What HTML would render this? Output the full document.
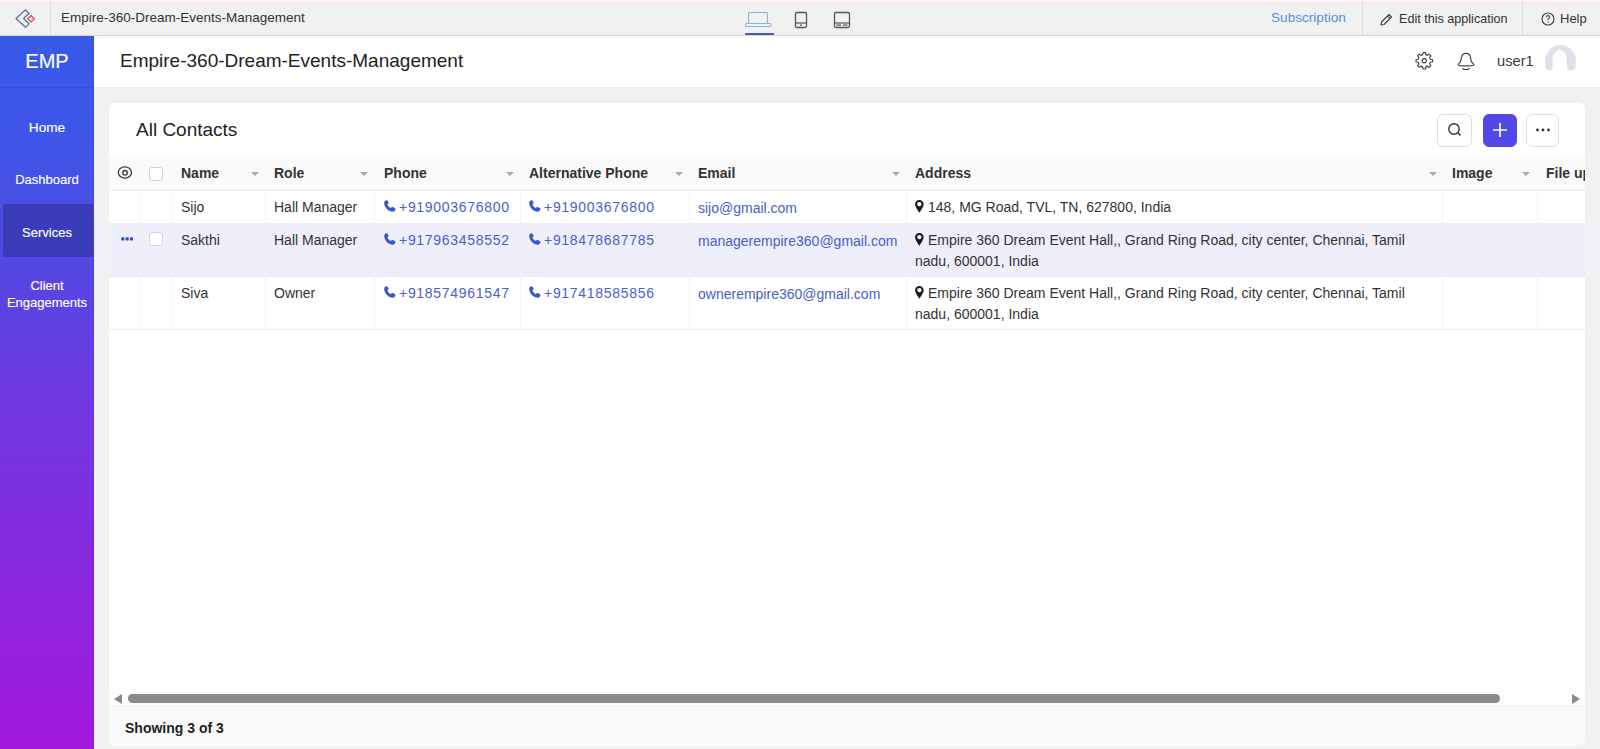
<!DOCTYPE html>
<html><head><meta charset="utf-8">
<style>
*{box-sizing:border-box;margin:0;padding:0}
html,body{width:1600px;height:749px;overflow:hidden;background:#f0f1f3;font-family:"Liberation Sans",sans-serif;color:#333}
.abs{position:absolute}
#topbar{position:absolute;left:0;top:0;width:1600px;height:36px;background:#f1f1f1;border-bottom:1px solid #d6d6d6}
#topbar .pink{position:absolute;left:0;top:0;width:1600px;height:2px;background:#fff1f5;border-bottom:0}
#topbar .pink2{position:absolute;left:0;top:2px;width:1600px;height:2px;background:#f0ebed}
.vsep{position:absolute;top:2px;width:1px;height:33px;background:#dcdcdc}
.tt{position:absolute;white-space:nowrap}
#side{position:absolute;left:0;top:36px;width:94px;height:713px;background:linear-gradient(180deg,#3759ea 0%,#3f55e7 16%,#5547e2 33%,#7038e0 52%,#a218dc 100%)}
#side .it{position:absolute;left:0;width:94px;text-align:center;color:#fff;font-size:13px;line-height:17px;-webkit-text-stroke:0.15px #fff}
#side .sel{position:absolute;left:3px;top:168px;width:90px;height:53px;background:#3b3cb9}
#hdr{position:absolute;left:94px;top:36px;width:1506px;height:52px;background:#fff;border-bottom:1px solid #ebecee}
#card{position:absolute;left:109px;top:103px;width:1476px;height:643px;background:#fff;border-radius:6px;overflow:hidden}
.btn{position:absolute;top:11px;width:35px;height:33px;border:1px solid #dedede;border-radius:6px;background:#fff}
#thead{position:absolute;left:0;top:54px;width:1476px;height:34px;background:#fafafa;border-bottom:1px solid #ececec}
.th{position:absolute;top:7px;font-weight:bold;font-size:14px;line-height:18px;color:#333;white-space:nowrap}
.arr{position:absolute;top:15px;width:0;height:0;border-left:4px solid transparent;border-right:4px solid transparent;border-top:4px solid #aaa}
.row{position:absolute;left:0;width:1476px;border-bottom:1px solid #ededed}
.cs{position:absolute;top:0;width:1px;background:#f4f4f6}
.td{position:absolute;font-size:14px;line-height:20px;color:#333;white-space:nowrap}
.lk{color:#4a60c8}
.ph{letter-spacing:0.7px}
</style></head><body>

<div id="topbar">
  <div class="pink"></div><div class="pink2"></div>
  <svg class="abs" style="left:14px;top:9px" width="24" height="20" viewBox="0 0 24 20">
    <path d="M11.5 0.9 L2 9.5 L11.5 18.3 L15 14.8 L9.6 9.5 L15 4.2 Z" fill="none" stroke="#4f6f9f" stroke-width="1.2" stroke-linejoin="round"/>
    <path d="M17 6.6 L20.2 9.8 L17 13 L13.8 9.8 Z" fill="none" stroke="#d05a5a" stroke-width="1.4"/>
  </svg>
  <div class="vsep" style="left:50px"></div>
  <div class="tt" style="left:61px;top:10px;font-size:13.5px;line-height:16px;color:#333">Empire-360-Dream-Events-Management</div>

  <svg class="abs" style="left:744px;top:10px" width="30" height="20" viewBox="0 0 30 20">
    <rect x="4.5" y="2.5" width="19" height="11" rx="1" fill="none" stroke="#86b2e4" stroke-width="1.1"/>
    <rect x="1.5" y="13.5" width="25.5" height="3" rx="1.2" fill="none" stroke="#86b2e4" stroke-width="1.1"/>
  </svg>
  <div class="abs" style="left:745px;top:33px;width:29px;height:2px;background:#4a5cab"></div>
  <svg class="abs" style="left:793px;top:10px" width="16" height="20" viewBox="0 0 16 20">
    <rect x="2.5" y="2.5" width="11" height="15" rx="1.5" fill="none" stroke="#555" stroke-width="1.3"/>
    <line x1="2.5" y1="13" x2="13.5" y2="13" stroke="#555" stroke-width="1.2"/>
    <rect x="7" y="14.5" width="2" height="1.2" fill="#555"/>
  </svg>
  <svg class="abs" style="left:832px;top:10px" width="20" height="20" viewBox="0 0 20 20">
    <rect x="2.5" y="2.5" width="15" height="15" rx="1.5" fill="none" stroke="#555" stroke-width="1.3"/>
    <line x1="2.5" y1="13" x2="17.5" y2="13" stroke="#555" stroke-width="1.2"/>
    <rect x="4.5" y="14.5" width="4.5" height="1.2" fill="#555"/>
    <rect x="11" y="14.5" width="4.5" height="1.2" fill="#555"/>
  </svg>

  <div class="tt" style="left:1271px;top:10px;font-size:13.6px;line-height:16px;color:#5690d3">Subscription</div>
  <div class="vsep" style="left:1362px"></div>
  <svg class="abs" style="left:1378px;top:11.5px" width="16" height="16" viewBox="0 0 16 16">
    <path d="M3 13 L3.5 10 L11 2.5 L13.5 5 L6 12.5 Z M9.5 4 L12 6.5" fill="none" stroke="#444" stroke-width="1.2" stroke-linejoin="round"/>
  </svg>
  <div class="tt" style="left:1399px;top:11px;font-size:12.6px;line-height:16px;color:#333">Edit this application</div>
  <div class="vsep" style="left:1522px"></div>
  <svg class="abs" style="left:1540px;top:11px" width="16" height="16" viewBox="0 0 16 16">
    <circle cx="8" cy="8" r="6" fill="none" stroke="#444" stroke-width="1.2"/>
    <path d="M6.3 6.3 Q6.3 4.6 8 4.6 Q9.7 4.6 9.7 6.2 Q9.7 7.3 8 8 L8 9.3" fill="none" stroke="#444" stroke-width="1.1"/>
    <circle cx="8" cy="11.2" r="0.7" fill="#444"/>
  </svg>
  <div class="tt" style="left:1560px;top:11px;font-size:13px;line-height:16px;color:#333">Help</div>
</div>

<div id="side">
  <div class="it" style="top:14px;font-size:20px;line-height:22px">EMP</div>
  <div class="abs" style="left:0;top:51px;width:94px;height:1px;background:rgba(20,30,120,0.12)"></div>
  <div class="abs" style="left:93px;top:0;width:1px;height:713px;background:rgba(20,20,80,0.15)"></div>
  <div class="it" style="top:83px;font-size:13.6px">Home</div>
  <div class="it" style="top:135px">Dashboard</div>
  <div class="sel"></div>
  <div class="it" style="top:188px">Services</div>
  <div class="it" style="top:241px">Client</div>
  <div class="it" style="top:258px">Engagements</div>
</div>

<div id="hdr">
  <div class="tt" style="left:26px;top:14px;font-size:19px;line-height:22px;color:#222">Empire-360-Dream-Events-Management</div>
  <svg class="abs" style="left:1320px;top:15px" width="20" height="20" viewBox="0 0 20 20">
    <circle cx="10.25" cy="9.75" r="2.1" fill="none" stroke="#444" stroke-width="1.15"/>
    <path d="M8.73 3.64 L8.95 1.55 L11.55 1.55 L11.77 3.64 L13.49 4.35 L15.13 3.04 L16.96 4.87 L15.65 6.51 L16.36 8.23 L18.45 8.45 L18.45 11.05 L16.36 11.27 L15.65 12.99 L16.96 14.63 L15.13 16.46 L13.49 15.15 L11.77 15.86 L11.55 17.95 L8.95 17.95 L8.73 15.86 L7.01 15.15 L5.37 16.46 L3.54 14.63 L4.85 12.99 L4.14 11.27 L2.05 11.05 L2.05 8.45 L4.14 8.23 L4.85 6.51 L3.54 4.87 L5.37 3.04 L7.01 4.35 Z" fill="none" stroke="#444" stroke-width="1.15" stroke-linejoin="round"/>
  </svg>
  <svg class="abs" style="left:1361px;top:15px" width="22" height="22" viewBox="0 0 22 22">
    <path d="M11 2.3 Q15.4 2.3 15.7 7.6 Q15.9 11 18.2 12.6 Q19.3 13.5 18.4 14.3 Q17.4 14.9 11 14.9 Q4.6 14.9 3.6 14.3 Q2.7 13.5 3.8 12.6 Q6.1 11 6.3 7.6 Q6.6 2.3 11 2.3 Z" fill="none" stroke="#444" stroke-width="1.15" stroke-linejoin="round"/>
    <path d="M7.3 17.4 Q11 19.6 14.7 17.4" fill="none" stroke="#444" stroke-width="1.15"/>
  </svg>
  <div class="tt" style="left:1403px;top:16px;font-size:14.7px;line-height:18px;color:#3c3c3c">user1</div>
  <svg class="abs" style="left:1450px;top:8px" width="34" height="34" viewBox="0 0 34 34">
    <path d="M1.3 17 A15.3 16 0 0 1 31.9 17 L31.6 23 Q30.5 26.5 25.5 26.5 Q22.8 25.5 22.8 22 L22.8 17 A7.1 11.2 0 0 0 8.6 17 L8.6 22 Q8.6 25.5 6 26.5 Q1.8 26.5 1.3 23 Z" fill="#dde1ea"/>
  </svg>
</div>

<div id="card">
  <div class="tt" style="left:27px;top:16px;font-size:19px;line-height:22px;color:#222">All Contacts</div>
  <div class="btn" style="left:1328px">
    <svg class="abs" style="left:8px;top:6px" width="18" height="18" viewBox="0 0 18 18">
      <circle cx="8" cy="8" r="5.2" fill="none" stroke="#333" stroke-width="1.4"/>
      <line x1="11.8" y1="11.8" x2="14.5" y2="14.5" stroke="#333" stroke-width="1.5"/>
    </svg>
  </div>
  <div class="btn" style="left:1374px;width:34px;background:#5248e8;border-color:#5248e8">
    <svg class="abs" style="left:6px;top:5px" width="20" height="20" viewBox="0 0 20 20">
      <line x1="10" y1="3" x2="10" y2="17" stroke="#fff" stroke-width="1.7"/>
      <line x1="3" y1="10" x2="17" y2="10" stroke="#fff" stroke-width="1.7"/>
    </svg>
  </div>
  <div class="btn" style="left:1417px;width:33px">
    <svg class="abs" style="left:6px;top:11px" width="20" height="8" viewBox="0 0 20 8">
      <circle cx="4.5" cy="4" r="1.4" fill="#333"/><circle cx="10" cy="4" r="1.4" fill="#333"/><circle cx="15.5" cy="4" r="1.4" fill="#333"/>
    </svg>
  </div>

  <div id="thead">
    <svg class="abs" style="left:7px;top:9px" width="17" height="14" viewBox="0 0 17 14">
      <ellipse cx="8.9" cy="6.5" rx="6.6" ry="5.6" fill="none" stroke="#3a3a3a" stroke-width="1.3"/>
      <circle cx="9" cy="6.8" r="2.3" fill="none" stroke="#3a3a3a" stroke-width="1.3"/>
    </svg>
    <div class="abs" style="left:40px;top:10px;width:14px;height:14px;border:1px solid #d2d2d2;border-radius:3px;background:#fff"></div>
    <div class="th" style="left:72px">Name</div><div class="arr" style="left:142px"></div>
    <div class="th" style="left:165px">Role</div><div class="arr" style="left:251px"></div>
    <div class="th" style="left:275px">Phone</div><div class="arr" style="left:397px"></div>
    <div class="th" style="left:420px">Alternative Phone</div><div class="arr" style="left:566px"></div>
    <div class="th" style="left:589px">Email</div><div class="arr" style="left:783px"></div>
    <div class="th" style="left:806px">Address</div><div class="arr" style="left:1320px"></div>
    <div class="th" style="left:1343px">Image</div><div class="arr" style="left:1413px"></div>
    <div class="th" style="left:1437px">File up</div>
  </div>

    <!-- row1 -->
  <div class="row" style="top:88px;height:33px"></div>
  <div class="row" style="top:121px;height:53px;background:#efeffb"></div>
  <div class="row" style="top:174px;height:53px"></div>
  <div class="cs" style="left:31px;top:88px;height:139px"></div>
  <div class="cs" style="left:62px;top:88px;height:139px"></div>
  <div class="cs" style="left:156px;top:88px;height:139px"></div>
  <div class="cs" style="left:265px;top:88px;height:139px"></div>
  <div class="cs" style="left:411px;top:88px;height:139px"></div>
  <div class="cs" style="left:580px;top:88px;height:139px"></div>
  <div class="cs" style="left:797px;top:88px;height:139px"></div>
  <div class="cs" style="left:1333px;top:88px;height:139px"></div>
  <div class="cs" style="left:1428px;top:88px;height:139px"></div>

  <div class="td" style="left:72px;top:94px">Sijo</div>
  <div class="td" style="left:165px;top:94px">Hall Manager</div>
  <div class="td lk" style="left:275px;top:94px"><svg width="12" height="12" viewBox="0 0 12 12" style="margin-right:3px"><path d="M1.2 0.8 Q2.4 -0.1 3.5 0.6 L4.5 2.5 Q4.8 3.3 4.1 3.8 L3.3 4.4 Q4.5 6.9 6.9 8.1 L7.5 7.3 Q8.1 6.7 8.9 7.1 L11 8.3 Q11.8 8.9 11.3 10 Q10.4 11.8 8.6 11.7 Q4.2 11.1 1.8 7.7 Q0 5 0.2 2.8 Q0.3 1.5 1.2 0.8 Z" fill="#3d55c9"/></svg><span class="ph">+919003676800</span></div>
  <div class="td lk" style="left:420px;top:94px"><svg width="12" height="12" viewBox="0 0 12 12" style="margin-right:3px"><path d="M1.2 0.8 Q2.4 -0.1 3.5 0.6 L4.5 2.5 Q4.8 3.3 4.1 3.8 L3.3 4.4 Q4.5 6.9 6.9 8.1 L7.5 7.3 Q8.1 6.7 8.9 7.1 L11 8.3 Q11.8 8.9 11.3 10 Q10.4 11.8 8.6 11.7 Q4.2 11.1 1.8 7.7 Q0 5 0.2 2.8 Q0.3 1.5 1.2 0.8 Z" fill="#3d55c9"/></svg><span class="ph">+919003676800</span></div>
  <div class="td lk" style="left:589px;top:95px">sijo@gmail.com</div>
  <div class="td" style="left:806px;top:94px"><svg width="9" height="13" viewBox="0 0 9 13" style="margin-right:4px;vertical-align:-1px"><path d="M4.35 0 A4.35 4.35 0 0 1 8.7 4.35 Q8.7 6.6 4.35 12.8 Q0 6.6 0 4.35 A4.35 4.35 0 0 1 4.35 0 Z M4.35 1.9 A2.2 2.2 0 1 0 4.36 1.9 Z" fill="#1a1a1a" fill-rule="evenodd"/></svg>148, MG Road, TVL, TN, 627800, India</div>

  <svg class="abs" style="left:12px;top:134px" width="13" height="4" viewBox="0 0 13 4"><rect x="0.2" y="0.2" width="3.2" height="3.4" rx="0.9" fill="#3a50c0"/><rect x="4.5" y="0.2" width="3.2" height="3.4" rx="0.9" fill="#3a50c0"/><rect x="8.8" y="0.2" width="3.2" height="3.4" rx="0.9" fill="#3a50c0"/></svg>
  <div class="abs" style="left:40px;top:129px;width:14px;height:14px;border:1px solid #d2d2d2;border-radius:3px;background:#fff"></div>
  <div class="td" style="left:72px;top:127px">Sakthi</div>
  <div class="td" style="left:165px;top:127px">Hall Manager</div>
  <div class="td lk" style="left:275px;top:127px"><svg width="12" height="12" viewBox="0 0 12 12" style="margin-right:3px"><path d="M1.2 0.8 Q2.4 -0.1 3.5 0.6 L4.5 2.5 Q4.8 3.3 4.1 3.8 L3.3 4.4 Q4.5 6.9 6.9 8.1 L7.5 7.3 Q8.1 6.7 8.9 7.1 L11 8.3 Q11.8 8.9 11.3 10 Q10.4 11.8 8.6 11.7 Q4.2 11.1 1.8 7.7 Q0 5 0.2 2.8 Q0.3 1.5 1.2 0.8 Z" fill="#3d55c9"/></svg><span class="ph">+917963458552</span></div>
  <div class="td lk" style="left:420px;top:127px"><svg width="12" height="12" viewBox="0 0 12 12" style="margin-right:3px"><path d="M1.2 0.8 Q2.4 -0.1 3.5 0.6 L4.5 2.5 Q4.8 3.3 4.1 3.8 L3.3 4.4 Q4.5 6.9 6.9 8.1 L7.5 7.3 Q8.1 6.7 8.9 7.1 L11 8.3 Q11.8 8.9 11.3 10 Q10.4 11.8 8.6 11.7 Q4.2 11.1 1.8 7.7 Q0 5 0.2 2.8 Q0.3 1.5 1.2 0.8 Z" fill="#3d55c9"/></svg><span class="ph">+918478687785</span></div>
  <div class="td lk" style="left:589px;top:128px">managerempire360@gmail.com</div>
  <div class="td" style="left:806px;top:127px"><svg width="9" height="13" viewBox="0 0 9 13" style="margin-right:4px;vertical-align:-1px"><path d="M4.35 0 A4.35 4.35 0 0 1 8.7 4.35 Q8.7 6.6 4.35 12.8 Q0 6.6 0 4.35 A4.35 4.35 0 0 1 4.35 0 Z M4.35 1.9 A2.2 2.2 0 1 0 4.36 1.9 Z" fill="#1a1a1a" fill-rule="evenodd"/></svg>Empire 360 Dream Event Hall,, Grand Ring Road, city center, Chennai, Tamil</div>
  <div class="td" style="left:806px;top:148px">nadu, 600001, India</div>

  <div class="td" style="left:72px;top:180px">Siva</div>
  <div class="td" style="left:165px;top:180px">Owner</div>
  <div class="td lk" style="left:275px;top:180px"><svg width="12" height="12" viewBox="0 0 12 12" style="margin-right:3px"><path d="M1.2 0.8 Q2.4 -0.1 3.5 0.6 L4.5 2.5 Q4.8 3.3 4.1 3.8 L3.3 4.4 Q4.5 6.9 6.9 8.1 L7.5 7.3 Q8.1 6.7 8.9 7.1 L11 8.3 Q11.8 8.9 11.3 10 Q10.4 11.8 8.6 11.7 Q4.2 11.1 1.8 7.7 Q0 5 0.2 2.8 Q0.3 1.5 1.2 0.8 Z" fill="#3d55c9"/></svg><span class="ph">+918574961547</span></div>
  <div class="td lk" style="left:420px;top:180px"><svg width="12" height="12" viewBox="0 0 12 12" style="margin-right:3px"><path d="M1.2 0.8 Q2.4 -0.1 3.5 0.6 L4.5 2.5 Q4.8 3.3 4.1 3.8 L3.3 4.4 Q4.5 6.9 6.9 8.1 L7.5 7.3 Q8.1 6.7 8.9 7.1 L11 8.3 Q11.8 8.9 11.3 10 Q10.4 11.8 8.6 11.7 Q4.2 11.1 1.8 7.7 Q0 5 0.2 2.8 Q0.3 1.5 1.2 0.8 Z" fill="#3d55c9"/></svg><span class="ph">+917418585856</span></div>
  <div class="td lk" style="left:589px;top:181px">ownerempire360@gmail.com</div>
  <div class="td" style="left:806px;top:180px"><svg width="9" height="13" viewBox="0 0 9 13" style="margin-right:4px;vertical-align:-1px"><path d="M4.35 0 A4.35 4.35 0 0 1 8.7 4.35 Q8.7 6.6 4.35 12.8 Q0 6.6 0 4.35 A4.35 4.35 0 0 1 4.35 0 Z M4.35 1.9 A2.2 2.2 0 1 0 4.36 1.9 Z" fill="#1a1a1a" fill-rule="evenodd"/></svg>Empire 360 Dream Event Hall,, Grand Ring Road, city center, Chennai, Tamil</div>
  <div class="td" style="left:806px;top:201px">nadu, 600001, India</div>

  <!-- scrollbar -->
  <div class="abs" style="left:0;top:585px;width:1476px;height:19px;background:#fdfdfd"></div>
  <div class="abs" style="left:5px;top:591px;width:0;height:0;border-top:5px solid transparent;border-bottom:5px solid transparent;border-right:8px solid #8a8a8a"></div>
  <div class="abs" style="left:19px;top:591px;width:1372px;height:9px;background:#8a8a8a;border-radius:5px"></div>
  <div class="abs" style="left:1463px;top:591px;width:0;height:0;border-top:5px solid transparent;border-bottom:5px solid transparent;border-left:8px solid #8a8a8a"></div>
  <!-- footer -->
  <div class="abs" style="left:0;top:603px;width:1476px;height:40px;background:#fafafa;border-top:1px solid #eeeeee"></div>
  <div class="tt" style="left:16px;top:616px;font-size:14px;line-height:18px;font-weight:bold;color:#222">Showing 3 of 3</div>

</div>

</body></html>
